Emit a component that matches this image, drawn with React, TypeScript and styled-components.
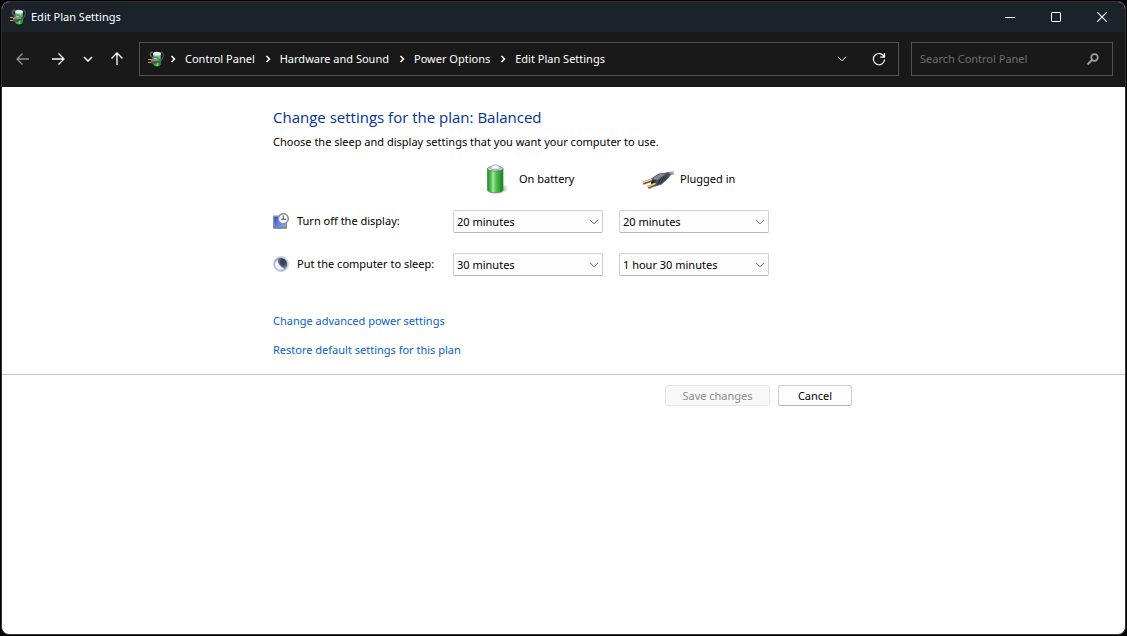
import React from 'react';
import styled, { createGlobalStyle } from 'styled-components';

const GlobalStyle = createGlobalStyle`
  *, *::before, *::after { box-sizing: border-box; }
  body {
    margin: 0;
    background: #000;
    color: #000;
    font-family: "Segoe UI", "Noto Sans", "Open Sans", sans-serif;
    font-size: 11px;
    line-height: 16px;
  }
  button, input, select { font: inherit; }
  svg { display: block; flex: none; }
`;

const Desktop = styled.div`
  display: flex;
  min-height: 100vh;
  padding: 1px;
`;

const Window = styled.div`
  flex: 1;
  min-width: 0;
  display: flex;
  flex-direction: column;
  border: 1px solid #343434;
  border-radius: 8px;
  background: #fff;
  overflow: hidden;
`;

const TitleBar = styled.header`
  display: flex;
  align-items: center;
  height: 30px;
  padding-left: 8px;
  background: #1b222a;
  color: #fff;
`;

const WindowTitle = styled.h1`
  flex: 1;
  margin: 0 0 0 5px;
  font-size: 11px;
  font-weight: 400;
`;

const CaptionButton = styled.button`
  display: flex;
  align-items: center;
  justify-content: center;
  width: 46px;
  height: 30px;
  padding: 0;
  border: 0;
  background: transparent;
  color: #fff;
`;

const NavBar = styled.nav`
  display: flex;
  align-items: center;
  height: 55px;
  padding: 0 12px 1px 4px;
  background: #191919;
  color: #fff;
`;

const NavButton = styled.button<{ $width: number }>`
  display: flex;
  align-items: center;
  justify-content: center;
  flex: none;
  width: ${(p) => p.$width}px;
  height: 34px;
  padding: 0;
  border: 0;
  background: transparent;
  color: #fff;

  &:disabled { color: #8f8f8f; }
`;

const AddressBar = styled.div`
  flex: 1;
  min-width: 0;
  display: flex;
  align-items: center;
  height: 34px;
  margin: 0 12px 0 5px;
  padding-left: 8px;
  border: 1px solid #535353;
`;

const Crumbs = styled.ol`
  flex: 1;
  display: flex;
  margin: 0;
  padding: 0;
  list-style: none;
`;

const Crumb = styled.li`
  display: flex;
  align-items: center;
  white-space: nowrap;

  svg { margin: 0 9px 0 10px; }
  &:first-child svg { margin-left: 6px; }
  a { color: #fff; text-decoration: none; }
`;

const SearchBox = styled.label`
  display: flex;
  align-items: center;
  width: 202px;
  height: 34px;
  padding: 0 12px 0 8px;
  border: 1px solid #535353;
  color: #a0a0a0;
`;

const SearchInput = styled.input`
  flex: 1;
  min-width: 0;
  padding: 0;
  border: 0;
  outline: 0;
  background: transparent;
  color: #fff;

  &::placeholder { color: #6e6e6e; opacity: 1; }
`;

const Column = styled.div`
  width: 100%;
  max-width: 581px;
  margin: 0 auto;
`;

const Heading = styled.h2`
  margin: 19px 0 6px;
  color: #003399;
  font-family: "Segoe UI", "Open Sans", sans-serif;
  font-size: 15px;
  font-weight: 400;
  line-height: 22px;
`;

const Intro = styled.p`
  margin: 0 0 13px;
`;

const SettingsGrid = styled.div`
  display: grid;
  grid-template-columns: 164px 150px 150px;
  column-gap: 16px;
  row-gap: 20px;
  align-items: center;
`;

const SourceHeader = styled.div<{ $inset: number }>`
  display: flex;
  align-items: center;
  gap: 6px;
  height: 32px;
  margin-bottom: -5px;
  padding-left: ${(p) => p.$inset}px;
`;

const SettingLabel = styled.div`
  display: flex;
  align-items: center;
  gap: 8px;
  padding-bottom: 2px;
  white-space: nowrap;
`;

const SelectFrame = styled.div`
  position: relative;
  color: #5c5c5c;

  svg {
    position: absolute;
    top: 9px;
    right: 4px;
    pointer-events: none;
  }
`;

const Select = styled.select`
  display: block;
  appearance: none;
  width: 100%;
  height: 23px;
  padding: 0 20px 0 3px;
  border: 1px solid #cfcfcf;
  border-bottom-color: #b8b8b8;
  border-radius: 2px;
  background: #fdfdfd;
  color: #000;
`;

const Links = styled.div`
  display: flex;
  flex-direction: column;
  align-items: flex-start;
  gap: 13px;
  margin: 37px 0 16px;
`;

const TaskLink = styled.a`
  color: #0a60cc;
  text-decoration: none;
`;

const Footer = styled.footer`
  border-top: 1px solid #c8c8c8;
  padding-top: 10px;
`;

const Actions = styled.div`
  display: flex;
  justify-content: flex-end;
  gap: 8px;
  padding-right: 2px;
`;

const PushButton = styled.button<{ $width: number }>`
  width: ${(p) => p.$width}px;
  height: 21px;
  padding: 0;
  border: 1px solid #cccccc;
  border-bottom-color: #b5b5b5;
  border-radius: 3px;
  background: #fdfdfd;
  color: #000;
  line-height: 19px;

  &:disabled {
    border-color: #e6e6e6;
    background: #f8f8f8;
    color: #8b8b8b;
  }
`;

const PowerIcon = () => (
  <svg width="16" height="16" viewBox="0 0 16 16" fill="none" aria-hidden="true">
    <path d="M12.500 1.500c3-.3 3.300 2 2.500 4.500-.6 2-1.600 3-2.500 4.500" stroke="#4b5052" strokeWidth="1.200" />
    <path d="M5 3h8l-.3 10.500c-1.200 2.600-6.200 2.600-7.500 0z" fill="#35a83c" />
    <path d="M10.500 5H13l-.3 8.500-2.200 1.300z" fill="#1f8a2d" />
    <path d="M8.500 11.500h1.800V15H8.500z" fill="#79dc72" />
    <path d="M9.500 4.500l3 .5-.2 3-2.500-1z" fill="#5fd45c" />
    <ellipse cx="9" cy="2.700" rx="4" ry="2" fill="#e8edf7" />
    <path d="M5.500 4.300c2 1 5 1 7 0" stroke="#b9c5da" strokeWidth=".8" />
    <path d="M7.500 8.500C5.500 6.500 2 5.500 2.300 3.300 2.500 1.500 4 .8 5.300 1.500" stroke="#60666a" strokeWidth="1.400" />
    <path d="M3 8.500l3-2 5 1.500v3L7.500 13 3 12z" fill="#85898b" />
    <path d="M3 10.500l8-.5v1L7.500 13 3 12z" fill="#4c4e50" />
    <path d="M6 7l3 1" stroke="#c4c7c9" />
    <path d="M0 8.500h3.300M0 11.500h3.300" stroke="#e5a800" strokeWidth="1.100" />
  </svg>
);

const BatteryIcon = () => (
  <svg width="32" height="32" viewBox="0 0 32 32" aria-hidden="true">
    <defs>
      <linearGradient id="cell" x1="0" x2="1" y1="0" y2="0">
        <stop offset="0" stopColor="#2c8b2c" />
        <stop offset=".2" stopColor="#4fba4c" />
        <stop offset=".36" stopColor="#a5e59d" />
        <stop offset=".55" stopColor="#50c251" />
        <stop offset="1" stopColor="#167e20" />
      </linearGradient>
      <radialGradient id="shade">
        <stop offset="0" stopColor="#777" stopOpacity=".7" />
        <stop offset="1" stopColor="#999" stopOpacity="0" />
      </radialGradient>
    </defs>
    <ellipse cx="21" cy="25.500" rx="7" ry="5" fill="url(#shade)" />
    <path d="M6.500 5.500v22c1.800 3.200 13.700 3.200 15.500 0v-22z" fill="url(#cell)" stroke="#338d36" strokeWidth=".7" />
    <ellipse cx="14.200" cy="5.600" rx="7.700" ry="2.500" fill="#cdd8da" stroke="#668b71" strokeWidth=".8" />
    <path d="M9 5.200c1.600-4.500 8.900-4.500 10.500 0-1 2.100-9.500 2.100-10.500 0z" fill="#d5e1f1" stroke="#8290a7" strokeWidth=".6" />
    <ellipse cx="14.200" cy="4" rx="3" ry="1.300" fill="#fff" />
  </svg>
);

const PlugIcon = () => (
  <svg width="32" height="32" viewBox="0 0 32 32" fill="none" aria-hidden="true">
    <defs>
      <linearGradient id="cord" gradientUnits="userSpaceOnUse" x1="20" x2="32" y1="0" y2="0">
        <stop offset="0" stopColor="#343942" />
        <stop offset="1" stopColor="#b5bcc6" />
      </linearGradient>
    </defs>
    <path d="M21 13.500c3-2.500 5.500-4 11-3.200" stroke="url(#cord)" strokeWidth="3.500" />
    <path d="M9 15.500L17 10.500l9-1 3 2-2.500 3.500-7 6.500-6.500 2-4-3z" fill="#4a505b" />
    <path d="M10 15.500l7.500-4.300 6.500-.6-8.500 6.400z" fill="#828995" />
    <path d="M13 23.200l-4-3v-4.500l5 3z" fill="#23272f" />
    <path d="M15.500 21.500l4-7M18.500 20.500l3.500-7M22 17.500l2.500-5" stroke="#252932" />
    <path d="M1 20.300l9-3.300M6 24.500l8-3.500" stroke="#75542e" strokeWidth="3.200" />
    <path d="M1 19.500l9-3.300M6 23.800l7.500-3.500" stroke="#eccb98" strokeWidth="1.600" />
  </svg>
);

const DisplayIcon = () => (
  <svg width="16" height="16" viewBox="0 0 16 16" fill="none" aria-hidden="true">
    <defs>
      <linearGradient id="screen" x1="0" x2="1" y1="0" y2="1">
        <stop offset="0" stopColor="#2444d9" />
        <stop offset="1" stopColor="#92b5fa" />
      </linearGradient>
    </defs>
    <path d="M.8 3.200h12.500v11.300H.8z" fill="url(#screen)" stroke="#858b9b" strokeWidth="1.400" />
    <path d="M.5 15.200h13" stroke="#777d8c" strokeWidth="1.200" />
    <circle cx="10.300" cy="5.700" r="5" fill="#f4f8fa" stroke="#8b9498" strokeWidth="1.500" />
    <path d="M10.300 2.500v3.800h3M8 6.300h2.300" stroke="#40606c" strokeWidth="1.100" />
  </svg>
);

const MoonIcon = () => (
  <svg width="16" height="16" viewBox="0 0 16 16" aria-hidden="true">
    <defs>
      <radialGradient id="moon" cx=".45" cy=".55" r=".55">
        <stop offset=".5" stopColor="#f0f5ff" />
        <stop offset=".75" stopColor="#8fb0ea" />
        <stop offset="1" stopColor="#cfd5dd" />
      </radialGradient>
      <radialGradient id="night" cx=".6" cy=".35" r=".62">
        <stop offset=".4" stopColor="#3c4250" />
        <stop offset="1" stopColor="#8590a6" />
      </radialGradient>
    </defs>
    <circle cx="8" cy="8" r="7.500" fill="url(#moon)" stroke="#c8ced7" strokeWidth=".8" />
    <path d="M4.500 3C7.500 .8 12 2 13.500 5.500c1.200 3 .3 5.700-1.500 7.500C8.500 11.500 4.500 8.500 4.500 3z" fill="url(#night)" />
  </svg>
);

const Chevron = () => (
  <svg width="10" height="6" viewBox="0 0 10 6" fill="none" aria-hidden="true">
    <path d="M1 .8l4 4 4-4" stroke="currentColor" />
  </svg>
);

const CrumbArrow = () => (
  <svg width="6" height="8" viewBox="0 0 6 8" fill="none" aria-hidden="true">
    <path d="M1.500 1l3 3-3 3" stroke="#fff" strokeWidth="1.500" />
  </svg>
);

const Arrow = ({ angle = 0 }: { angle?: number }) => (
  <svg width="14" height="14" viewBox="0 0 14 14" fill="none" aria-hidden="true">
    <path d="M1 7h12M7.500 1.500L13 7l-5.500 5.500" stroke="currentColor" strokeWidth="1.300" transform={`rotate(${angle} 7 7)`} />
  </svg>
);

const crumbs = ['Control Panel', 'Hardware and Sound', 'Power Options', 'Edit Plan Settings'];
const durations = ['20 minutes', '30 minutes', '1 hour 30 minutes', 'Never'];
const settings = [
  { id: 'display', label: 'Turn off the display:', Icon: DisplayIcon, battery: '20 minutes', plugged: '20 minutes' },
  { id: 'sleep', label: 'Put the computer to sleep:', Icon: MoonIcon, battery: '30 minutes', plugged: '1 hour 30 minutes' },
];

const DurationSelect = ({ id, value, name }: { id: string; value: string; name: string }) => (
  <SelectFrame>
    <Select id={id} defaultValue={value} aria-label={name}>
      {durations.map((d) => <option key={d}>{d}</option>)}
    </Select>
    <Chevron />
  </SelectFrame>
);

export default function App() {
  return (
    <Desktop>
      <GlobalStyle />
      <Window>
        <TitleBar>
          <PowerIcon />
          <WindowTitle>Edit Plan Settings</WindowTitle>
          <CaptionButton aria-label="Minimize">
            <svg width="10" height="10" viewBox="0 0 10 10"><path d="M0 5h10v1H0z" fill="currentColor" /></svg>
          </CaptionButton>
          <CaptionButton aria-label="Maximize">
            <svg width="10" height="10" viewBox="0 0 10 10" fill="none"><rect x=".5" y=".5" width="9" height="9" rx=".6" stroke="currentColor" /></svg>
          </CaptionButton>
          <CaptionButton aria-label="Close">
            <svg width="10" height="10" viewBox="0 0 10 10"><path d="M0 0l10 10M10 0L0 10" stroke="currentColor" strokeWidth="1.100" /></svg>
          </CaptionButton>
        </TitleBar>
        <NavBar>
          <NavButton $width={34} aria-label="Back" disabled><Arrow angle={180} /></NavButton>
          <NavButton $width={36} aria-label="Forward"><Arrow /></NavButton>
          <NavButton $width={24} aria-label="Recent locations">
            <svg width="10" height="6" viewBox="0 0 10 6" fill="none"><path d="M1 1l4 4 4-4" stroke="currentColor" strokeWidth="1.500" /></svg>
          </NavButton>
          <NavButton $width={34} aria-label="Up"><Arrow angle={-90} /></NavButton>
          <AddressBar>
            <PowerIcon />
            <Crumbs>
              {crumbs.map((c) => (
                <Crumb key={c}><CrumbArrow /><a href="#">{c}</a></Crumb>
              ))}
            </Crumbs>
            <NavButton $width={37} aria-label="Previous locations"><Chevron /></NavButton>
            <NavButton $width={38} aria-label="Refresh">
              <svg width="14" height="14" viewBox="0 0 14 14" fill="none">
                <path d="M12.200 5A5.600 5.600 0 1 0 12.600 7.500M12.500 1v4.200H8.300" stroke="currentColor" strokeWidth="1.200" />
              </svg>
            </NavButton>
          </AddressBar>
          <SearchBox>
            <SearchInput type="search" placeholder="Search Control Panel" aria-label="Search Control Panel" />
            <svg width="14" height="14" viewBox="0 0 14 14" fill="none" aria-hidden="true">
              <circle cx="8.500" cy="5.500" r="3.300" stroke="currentColor" strokeWidth="1.700" />
              <path d="M6 8L1.500 12.500" stroke="currentColor" strokeWidth="1.800" />
            </svg>
          </SearchBox>
        </NavBar>
        <main>
          <Column>
            <Heading>Change settings for the plan: Balanced</Heading>
            <Intro>Choose the sleep and display settings that you want your computer to use.</Intro>
            <SettingsGrid>
              <span />
              <SourceHeader $inset={28}><BatteryIcon />On battery</SourceHeader>
              <SourceHeader $inset={23}><PlugIcon />Plugged in</SourceHeader>
              {settings.map(({ id, label, Icon, battery, plugged }) => (
                <React.Fragment key={id}>
                  <SettingLabel><Icon /><label htmlFor={`${id}-battery`}>{label}</label></SettingLabel>
                  <DurationSelect id={`${id}-battery`} value={battery} name={`${label} On battery`} />
                  <DurationSelect id={`${id}-plugged`} value={plugged} name={`${label} Plugged in`} />
                </React.Fragment>
              ))}
            </SettingsGrid>
            <Links>
              <TaskLink href="#">Change advanced power settings</TaskLink>
              <TaskLink href="#">Restore default settings for this plan</TaskLink>
            </Links>
          </Column>
          <Footer>
            <Column>
              <Actions>
                <PushButton $width={105} disabled>Save changes</PushButton>
                <PushButton $width={74}>Cancel</PushButton>
              </Actions>
            </Column>
          </Footer>
        </main>
      </Window>
    </Desktop>
  );
}
